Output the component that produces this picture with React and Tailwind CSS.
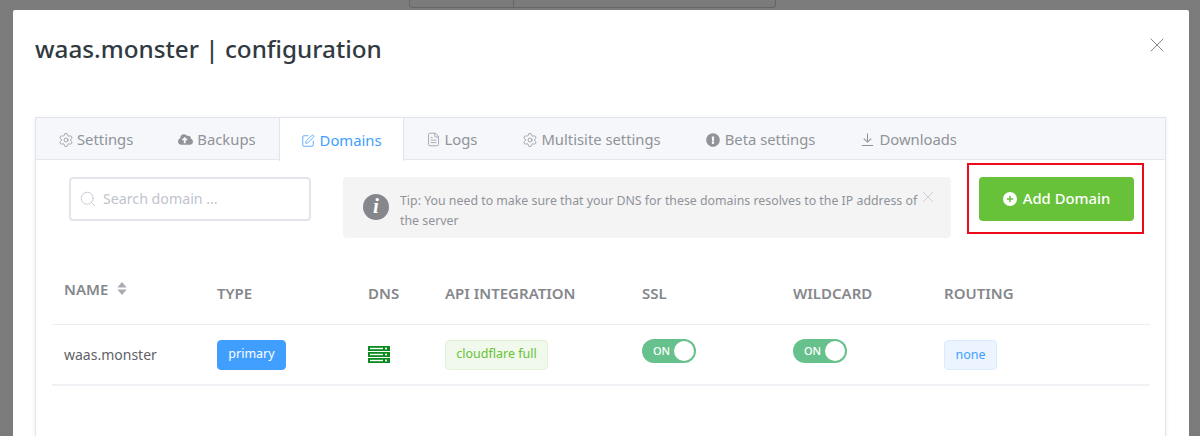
import React from "react";
import { Settings, SquarePen, FileText, X, Search } from "lucide-react";
import { FaCloudUploadAlt, FaExclamationCircle } from "react-icons/fa";

const DownloadIcon = ({ className }) => (
  <svg viewBox="0 0 16 16" fill="none" stroke="currentColor" strokeWidth="1.1" className={className}>
    <path d="M8 1.5v9M4 7l4 3.8L12 7M2 14.5h12" />
  </svg>
);

const SortIcon = () => (
  <svg viewBox="0 0 12 16" className="w-[12px] h-[15px] text-[#a8abb2] ml-[8px]" fill="currentColor">
    <path d="M6 1l5 6H1zM6 15L1 9h10z" />
  </svg>
);

const ServerIcon = () => (
  <svg viewBox="0 0 22 17" className="w-[22px] h-[17px]">
    {[0, 6, 12].map((y) => (
      <g key={y}>
        <rect x="0" y={y} width="22" height="5" fill="#0b8a1d" />
        <rect x="2" y={y + 1.8} width="13" height="1.4" fill="#fff" />
        <rect x="17" y={y + 1.6} width="2" height="1.8" fill="#fff" />
      </g>
    ))}
  </svg>
);

const PlusCircle = () => (
  <svg viewBox="0 0 14 14" className="w-[14px] h-[14px]">
    <circle cx="7" cy="7" r="7" fill="#fff" />
    <path d="M7 3.8v6.4M3.8 7h6.4" stroke="#67c23a" strokeWidth="1.5" />
  </svg>
);

const tabs = [
  { label: "Settings", icon: <Settings className="w-[16px] h-[16px] shrink-0" strokeWidth={1.2} /> },
  { label: "Backups", icon: <FaCloudUploadAlt className="w-[15px] h-[15px] shrink-0" /> },
  { label: "Domains", icon: <SquarePen className="w-[14px] h-[14px] shrink-0" strokeWidth={1.4} />, active: true },
  { label: "Logs", icon: <FileText className="w-[15px] h-[15px] shrink-0" strokeWidth={1.2} /> },
  { label: "Multisite settings", icon: <Settings className="w-[16px] h-[16px] shrink-0" strokeWidth={1.2} /> },
  { label: "Beta settings", icon: <FaExclamationCircle className="w-[14px] h-[14px] shrink-0" /> },
  { label: "Downloads", icon: <DownloadIcon className="w-[15px] h-[15px] shrink-0" /> },
];

const Toggle = () => (
  <div className="w-[54px] h-[24px] rounded-full bg-[#67c18c] flex items-center justify-between pl-[11px] pr-[2px] -mt-[7px]">
    <span className="text-[11px] font-medium text-white">ON</span>
    <span className="w-[20px] h-[20px] rounded-full bg-white"></span>
  </div>
);

const Tag = ({ className, children }) => (
  <span className={`inline-flex items-center justify-center h-[30px] rounded-[4px] border text-[12.5px] ${className}`}>
    {children}
  </span>
);

const headers = ["TYPE", "DNS", "API INTEGRATION", "SSL", "WILDCARD", "ROUTING"];
const gridCols = "grid grid-cols-[153px_151px_77px_197px_151px_151px_1fr]";

export default function App() {
  return (
    <div className="h-[436px] overflow-hidden bg-[#7b7b7b] font-['Noto_Sans',sans-serif]">
      <div className="h-[10px] pl-[409px]">
        <div className="w-[367px] h-[8px] border border-t-0 border-[#666] rounded-b-[4px] flex">
          <div className="w-[104px] border-r border-[#666]"></div>
        </div>
      </div>
      <div className="ml-[13px] w-[1176px] h-[426px] bg-white rounded-t-[2px] pl-[22px] pr-[23px]">
        <div className="flex justify-between h-[107px] pt-[20px]">
          <h1 className="text-[24.25px] leading-[38px] font-medium text-[#303a40]">waas.monster | configuration</h1>
          <X className="w-[24px] h-[24px] text-[#85888d] mt-[3px] mr-[-3px]" strokeWidth={1} />
        </div>

        <div className="h-[319px] border border-b-0 border-[#dfe4ed] shadow-[0_1px_4px_rgba(0,0,0,0.08)]">
          <div className="flex h-[42px] bg-[#f5f7fa] border-b border-[#e4e7ed]">
            {tabs.map((tab) => (
              <div
                key={tab.label}
                className={
                  tab.active
                    ? "flex items-center gap-[4px] px-[21px] pt-[2px] h-[43px] bg-white border-x border-[#dfe4ed] text-[#409eff] text-[14.8px] relative z-10"
                    : "flex items-center gap-[4px] pl-[22px] pr-[23px] pt-[2px] text-[#909399] text-[14.8px]"
                }
              >
                <span className="w-[15px] flex justify-center">{tab.icon}</span>
                <span>{tab.label}</span>
              </div>
            ))}
          </div>

          <div className="flex items-start pt-[17px] pl-[33px]">
            <div className="w-[242px] h-[44px] border-2 border-[#e3e5ec] rounded-[4px] flex items-center gap-[6px] pl-[8px]">
              <Search className="w-[18px] h-[18px] text-[#c0c4cc]" strokeWidth={1.1} />
              <span className="text-[14.2px] text-[#c0c4cc]">Search domain ...</span>
            </div>
            <div className="ml-[32px] w-[608px] h-[61px] bg-[#f4f4f5] rounded-[4px] flex pl-[20px] pt-[14px]">
              <span className="w-[26px] h-[26px] rounded-full bg-[#85878c] text-white flex items-center justify-center shrink-0 mt-[3px] font-['Liberation_Serif',serif] italic font-bold text-[21px]">
                i
              </span>
              <p className="ml-[11px] w-[518px] text-[12.35px] leading-[20px] text-[#909399]">
                Tip: You need to make sure that your DNS for these domains resolves to the IP address of the server
              </p>
              <X className="w-[18px] h-[18px] text-[#c0c4cc] mt-[-3px] ml-[1px]" strokeWidth={1} />
            </div>
            <div className="relative ml-[28px]">
              <button className="w-[155px] h-[44px] pb-[1px] rounded-[4px] bg-[#67c23a] text-white text-[14.8px] font-medium flex items-center justify-center gap-[6px]">
                <PlusCircle />
                Add Domain
              </button>
              <div className="absolute -top-[14px] -bottom-[13px] -left-[12px] -right-[10px] border-2 border-[#ed0a1a] pointer-events-none"></div>
            </div>
          </div>

          <div className="mt-[22px] ml-[16px] w-[1098px]">
            <div className={`${gridCols} h-[65px] border-b border-[#ebeef5] text-[15px] font-semibold text-[#85878c]`}>
              <div className="pl-[12px] pt-[18px] flex items-start">
                <span>NAME</span>
                <span className="mt-[3px]"><SortIcon /></span>
              </div>
              {headers.map((h) => (
                <div key={h} className="pl-[12px] pt-[22px]">{h}</div>
              ))}
            </div>
            <div className={`${gridCols} h-[61px] border-b-2 border-[#f0f1f5] items-center`}>
              <div className="pl-[12px] text-[14px] text-[#606266]">waas.monster</div>
              <div className="pl-[12px]">
                <Tag className="w-[69px] bg-[#409eff] border-[#409eff] text-white">primary</Tag>
              </div>
              <div className="pl-[12px] flex"><ServerIcon /></div>
              <div className="pl-[12px]">
                <Tag className="w-[103px] bg-[#f0f9eb] border-[#e1f3d8] text-[#67c23a]">cloudflare full</Tag>
              </div>
              <div className="pl-[12px]"><Toggle /></div>
              <div className="pl-[12px]"><Toggle /></div>
              <div className="pl-[12px]">
                <Tag className="w-[53px] pt-[2px] bg-[#ecf5ff] border-[#d9ecff] text-[#409eff]">none</Tag>
              </div>
            </div>
          </div>
        </div>
      </div>
    </div>
  );
}
